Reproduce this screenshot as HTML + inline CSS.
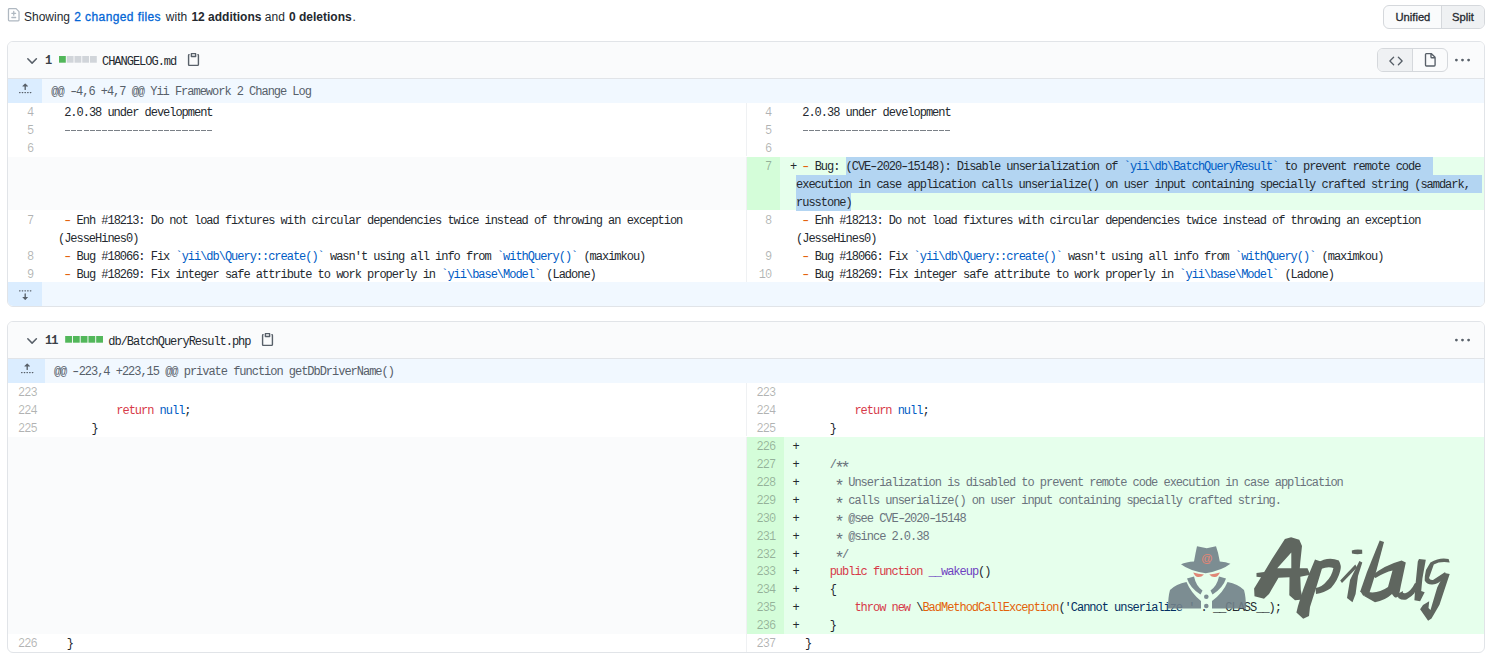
<!DOCTYPE html>
<html><head><meta charset="utf-8"><style>
*{box-sizing:border-box;margin:0;padding:0}
html,body{width:1492px;height:657px;overflow:hidden;background:#fff}
body{position:relative;-webkit-font-smoothing:antialiased;font-family:"Liberation Sans",sans-serif;color:#24292f;--ln:rgba(27,31,35,0.34)}
.abs{position:absolute}
.sans{font-size:12px;line-height:16px;white-space:pre;color:#24292f}
.btxt{font-size:11.2px;line-height:14px;white-space:pre;color:#24292f;-webkit-text-stroke:0.3px #24292f}
.mono{font-family:"Liberation Mono",monospace;font-size:12px;letter-spacing:-1.0200px;white-space:pre;line-height:18px;color:#24292f}
.bold{font-weight:bold;color:#3b4147}
.box{position:absolute;left:7px;width:1478px;border:1px solid #e1e4e8;border-radius:6px;overflow:hidden;background:#fff}
.ln{color:var(--ln)}
.hunk{color:#57606a}
.o{color:#e36209}
.b{color:#005cc5}
.kw{color:#d73a49}
.nl{color:#005cc5}
.nl2{color:#24292e}
.cm{color:#6a737d}
.fn{color:#6f42c1}
.cl{color:#e36209}
.st{color:#032f62}
.sel{background:#b4d5fb}
.selx{display:inline-block;width:6px;height:18px;vertical-align:top}
.hy{display:inline-block;transform:scaleX(1.45)}
.ast{display:inline-block;transform:translate(-0.3px,3.4px) scale(1.4)}
</style></head><body>
<svg class="abs" style="left:7.30px;top:8.00px" width="13.5" height="13.5" viewBox="0 0 16 16"><path fill="#afb8c1" d="M2.75 1.5a.25.25 0 00-.25.25v12.5c0 .138.112.25.25.25h10.5a.25.25 0 00.25-.25V4.664a.25.25 0 00-.073-.177l-2.914-2.914a.25.25 0 00-.177-.073H2.75zM1 1.75C1 .784 1.784 0 2.75 0h7.586c.464 0 .909.184 1.237.513l2.914 2.914c.329.328.513.773.513 1.237v9.586A1.75 1.75 0 0113.250 16H2.75A1.75 1.75 0 011 14.25V1.75zm7 1.5a.75.75 0 01.75.75v1.5h1.5a.75.75 0 010 1.5h-1.5v1.5a.75.75 0 01-1.5 0V7h-1.5a.75.75 0 010-1.5h1.5V4A.75.75 0 018 3.25zm-3 8a.75.75 0 01.75-.75h4.5a.75.75 0 010 1.5h-4.5a.75.75 0 01-.75-.75z"/></svg>
<div class="abs sans" style="left:24.0px;top:8.7px;">Showing</div>
<div class="abs sans" style="left:74.3px;top:8.7px;color:#0366d6;-webkit-text-stroke:0.3px #0366d6;letter-spacing:0.4px">2 changed files</div>
<div class="abs sans" style="left:165.8px;top:8.7px;">with</div>
<div class="abs sans" style="left:191.4px;top:8.7px;font-weight:bold">12 additions</div>
<div class="abs sans" style="left:264.8px;top:8.7px;">and</div>
<div class="abs sans" style="left:289.0px;top:8.7px;font-weight:bold">0 deletions</div>
<div class="abs sans" style="left:352.4px;top:8.7px;">.</div>
<div class="abs" style="left:1383px;top:5px;width:102px;height:24px;border:1px solid #d5d8dc;border-radius:6px;overflow:hidden;background:#fafbfc"><div class="abs" style="left:57px;top:0;width:45px;height:22px;background:#eff1f3;border-left:1px solid #d5d8dc"></div><div class="abs btxt" style="left:11.5px;top:4px">Unified</div><div class="abs btxt" style="left:68px;top:4px">Split</div></div>
<div class="box" style="top:41px;height:266px"><div class="abs" style="left:0.00px;top:0.00px;width:1476.00px;height:36.00px;background:#fafbfc;"></div><div class="abs" style="left:0.00px;top:36.00px;width:1476.00px;height:1.00px;background:#e1e4e8;"></div><svg class="abs" style="left:16.00px;top:9.90px" width="16.2" height="16.2" viewBox="0 0 16 16"><path fill="#586069" d="M12.78 6.22a.75.75 0 010 1.06l-4.25 4.25a.75.75 0 01-1.06 0L3.22 7.28a.75.75 0 011.06-1.06L8 9.94l3.72-3.72a.75.75 0 011.06 0z"/></svg><div class="abs mono bold" style="left:37.00px;top:10.30px;">1</div><svg class="abs" style="left:51px;top:14.20px;overflow:visible" width="40" height="7"><rect x="0.00" y="0" width="6.8" height="6.7" fill="#52b75a"/><rect x="7.75" y="0" width="6.8" height="6.7" fill="#d1d5da"/><rect x="15.50" y="0" width="6.8" height="6.7" fill="#d1d5da"/><rect x="23.25" y="0" width="6.8" height="6.7" fill="#d1d5da"/><rect x="31.00" y="0" width="6.8" height="6.7" fill="#d1d5da"/></svg><div class="abs mono " style="left:94.00px;top:10.50px;">CHANGELOG.md</div><svg class="abs" style="left:178.00px;top:9.60px" width="15" height="15" viewBox="0 0 16 16"><path fill="#586069" d="M5.75 1a.75.75 0 00-.75.75v3c0 .414.336.75.75.75h4.5a.75.75 0 00.75-.75v-3a.75.75 0 00-.75-.75h-4.5zm.75 3V2.5h3V4h-3zm-2.874-.467a.75.75 0 00-.752-1.298A1.75 1.75 0 002 3.75v9.5c0 .966.784 1.75 1.75 1.75h8.5A1.75 1.75 0 0014 13.25v-9.5a1.75 1.75 0 00-.874-1.515.75.75 0 10-.752 1.298.25.25 0 01.126.217v9.5a.25.25 0 01-.25.25h-8.5a.25.25 0 01-.25-.25v-9.5a.25.25 0 01.126-.217z"/></svg><div class="abs" style="left:1369px;top:6px;width:71px;height:24px;border:1px solid #d5d8dc;border-radius:6px;overflow:hidden;background:#fafbfc"><div class="abs" style="left:0;top:0;width:35px;height:22px;background:#eff1f3;border-right:1px solid #d5d8dc"></div></div><svg class="abs" style="left:1380.50px;top:11.50px" width="14" height="14" viewBox="0 0 16 16"><path fill="#586069" d="M4.72 3.22a.75.75 0 011.06 1.06L2.06 8l3.72 3.72a.75.75 0 11-1.06 1.06L.47 8.53a.75.75 0 010-1.06l4.25-4.25zm6.56 0a.75.75 0 10-1.06 1.06L13.94 8l-3.72 3.72a.75.75 0 101.06 1.06l4.25-4.25a.75.75 0 000-1.06l-4.25-4.25z"/></svg><svg class="abs" style="left:1414.90px;top:11.00px" width="14.6" height="14.6" viewBox="0 0 16 16"><path fill="#586069" d="M3.75 1.5a.25.25 0 00-.25.25v11.5c0 .138.112.25.25.25h8.5a.25.25 0 00.25-.25V6H9.75A1.75 1.75 0 018 4.25V1.5H3.75zm5.75.56v2.19c0 .138.112.25.25.25h2.19L9.5 2.06zM2 1.75C2 .784 2.784 0 3.75 0h5.086c.464 0 .909.184 1.237.513l3.414 3.414c.329.328.513.773.513 1.237v8.086A1.75 1.75 0 0112.25 15h-8.5A1.75 1.75 0 012 13.25V1.75z"/></svg><svg class="abs" style="left:1446.60px;top:10.60px" width="15" height="15" viewBox="0 0 16 16"><path fill="#586069" d="M8 9a1.5 1.5 0 100-3 1.5 1.5 0 000 3zM1.5 9a1.5 1.5 0 100-3 1.5 1.5 0 000 3zm13 0a1.5 1.5 0 100-3 1.5 1.5 0 000 3z"/></svg><div class="abs" style="left:0.00px;top:37.00px;width:34.00px;height:23.65px;background:#dbedff;"></div><div class="abs" style="left:34.00px;top:37.00px;width:1442.00px;height:23.65px;background:#f1f8ff;"></div><svg class="abs" style="left:10.40px;top:40.40px" width="14.4" height="14.4" viewBox="0 0 16 16"><path fill="#586069" d="M7.823 1.677L4.927 4.573A.25.25 0 005.104 5H7.25v3.236a.75.75 0 101.5 0V5h2.146a.25.25 0 00.177-.427L8.177 1.677a.25.25 0 00-.354 0zM13.75 11a.75.75 0 000 1.5h.5a.75.75 0 000-1.5h-.5zm-3.75.75a.75.75 0 01.75-.75h.5a.75.75 0 010 1.5h-.5a.75.75 0 01-.75-.75zM7.75 11a.75.75 0 000 1.5h.5a.75.75 0 000-1.5h-.5zM4 11.75a.75.75 0 01.75-.75h.5a.75.75 0 010 1.5h-.5a.75.75 0 01-.75-.75zM1.75 11a.75.75 0 000 1.5h.5a.75.75 0 000-1.5h-.5z"/></svg><div class="abs mono hunk" style="left:43.30px;top:41.00px;">@@ <span class="hy">-</span>4,6 +4,7 @@ Yii Framework 2 Change Log</div><div class="abs" style="left:738.00px;top:60.65px;width:1.00px;height:17.95px;background:#eff1f3;"></div><div class="abs mono ln" style="left:19.12px;top:61.95px;">4</div><div class="abs mono ln" style="left:756.92px;top:61.95px;">4</div><div class="abs mono " style="left:43.80px;top:61.95px;">  2.0.38 under development</div><div class="abs mono " style="left:781.90px;top:61.95px;">  2.0.38 under development</div><div class="abs" style="left:738.00px;top:78.60px;width:1.00px;height:17.95px;background:#eff1f3;"></div><div class="abs mono ln" style="left:19.12px;top:79.90px;">5</div><div class="abs mono ln" style="left:756.92px;top:79.90px;">5</div><div class="abs" style="left:56.76px;top:87.50px;width:148.32px;height:1.40px;background:repeating-linear-gradient(90deg,#7a8087 0,#7a8087 5.1px,transparent 5.1px,transparent 6.18px);"></div><div class="abs" style="left:794.86px;top:87.50px;width:148.32px;height:1.40px;background:repeating-linear-gradient(90deg,#7a8087 0,#7a8087 5.1px,transparent 5.1px,transparent 6.18px);"></div><div class="abs" style="left:738.00px;top:96.55px;width:1.00px;height:17.95px;background:#eff1f3;"></div><div class="abs mono ln" style="left:19.12px;top:97.85px;">6</div><div class="abs mono ln" style="left:756.92px;top:97.85px;">6</div><div class="abs mono " style="left:43.80px;top:97.85px;"> </div><div class="abs mono " style="left:781.90px;top:97.85px;"> </div><div class="abs" style="left:0.00px;top:114.50px;width:738.00px;height:53.85px;background:#fafbfc;"></div><div class="abs" style="left:738.00px;top:114.50px;width:1.00px;height:53.85px;background:#eff1f3;"></div><div class="abs" style="left:739.00px;top:114.50px;width:33.00px;height:53.85px;background:#d4fdd9;"></div><div class="abs" style="left:772.00px;top:114.50px;width:704.00px;height:53.85px;background:#e6ffec;"></div><div class="abs" style="left:838.00px;top:114.50px;width:586.90px;height:18.00px;background:#b3d5f2;"></div><div class="abs" style="left:788.00px;top:132.50px;width:685.80px;height:18.00px;background:#b3d5f2;"></div><div class="abs" style="left:788.00px;top:150.50px;width:55.00px;height:18.00px;background:#b3d5f2;"></div><div class="abs mono ln" style="left:756.92px;top:115.80px;">7</div><div class="abs mono " style="left:781.90px;top:115.80px;">+ <span class="o"><span class="hy">-</span></span> Bug: (CVE<span class="hy">-</span>2020<span class="hy">-</span>15148): Disable unserialization of <span class="b">`yii\db\BatchQueryResult`</span> to prevent remote code</div><div class="abs mono " style="left:788.08px;top:133.75px;">execution in case application calls unserialize() on user input containing specially crafted string (samdark,</div><div class="abs mono " style="left:788.08px;top:151.70px;">russtone)</div><div class="abs" style="left:738.00px;top:168.35px;width:1.00px;height:35.90px;background:#eff1f3;"></div><div class="abs mono ln" style="left:19.12px;top:169.65px;">7</div><div class="abs mono ln" style="left:756.92px;top:169.65px;">8</div><div class="abs mono " style="left:43.80px;top:169.65px;">  <span class="o"><span class="hy">-</span></span> Enh #18213: Do not load fixtures with circular dependencies twice instead of throwing an exception</div><div class="abs mono " style="left:49.98px;top:187.60px;">(JesseHines0)</div><div class="abs mono " style="left:781.90px;top:169.65px;">  <span class="o"><span class="hy">-</span></span> Enh #18213: Do not load fixtures with circular dependencies twice instead of throwing an exception</div><div class="abs mono " style="left:788.08px;top:187.60px;">(JesseHines0)</div><div class="abs" style="left:738.00px;top:204.25px;width:1.00px;height:17.95px;background:#eff1f3;"></div><div class="abs mono ln" style="left:19.12px;top:205.55px;">8</div><div class="abs mono ln" style="left:756.92px;top:205.55px;">9</div><div class="abs mono " style="left:43.80px;top:205.55px;">  <span class="o"><span class="hy">-</span></span> Bug #18066: Fix <span class="b">`yii\db\Query::create()`</span> wasn't using all info from <span class="b">`withQuery()`</span> (maximkou)</div><div class="abs mono " style="left:781.90px;top:205.55px;">  <span class="o"><span class="hy">-</span></span> Bug #18066: Fix <span class="b">`yii\db\Query::create()`</span> wasn't using all info from <span class="b">`withQuery()`</span> (maximkou)</div><div class="abs" style="left:738.00px;top:222.20px;width:1.00px;height:17.95px;background:#eff1f3;"></div><div class="abs mono ln" style="left:19.12px;top:223.50px;">9</div><div class="abs mono ln" style="left:750.74px;top:223.50px;">10</div><div class="abs mono " style="left:43.80px;top:223.50px;">  <span class="o"><span class="hy">-</span></span> Bug #18269: Fix integer safe attribute to work properly in <span class="b">`yii\base\Model`</span> (Ladone)</div><div class="abs mono " style="left:781.90px;top:223.50px;">  <span class="o"><span class="hy">-</span></span> Bug #18269: Fix integer safe attribute to work properly in <span class="b">`yii\base\Model`</span> (Ladone)</div><div class="abs" style="left:0.00px;top:240.15px;width:34.00px;height:23.85px;background:#dbedff;"></div><div class="abs" style="left:34.00px;top:240.15px;width:1442.00px;height:23.85px;background:#f1f8ff;"></div><svg class="abs" style="left:10.40px;top:245.05px" width="14.4" height="14.4" viewBox="0 0 16 16"><path fill="#586069" d="M8.177 14.323l2.896-2.896a.25.25 0 00-.177-.427H8.75V7.764a.75.75 0 10-1.5 0V11H5.104a.25.25 0 00-.177.427l2.896 2.896a.25.25 0 00.354 0zM2.25 5a.75.75 0 000-1.5h-.5a.75.75 0 000 1.5h.5zM6 4.25a.75.75 0 01-.75.75h-.5a.75.75 0 010-1.5h.5a.75.75 0 01.75.75zM8.25 5a.75.75 0 000-1.5h-.5a.75.75 0 000 1.5h.5zM12 4.25a.75.75 0 01-.75.75h-.5a.75.75 0 010-1.5h.5a.75.75 0 01.75.75zm2.25.75a.75.75 0 000-1.5h-.5a.75.75 0 000 1.5h.5z"/></svg></div>
<div class="box" style="top:321px;height:332px"><div class="abs" style="left:0.00px;top:0.00px;width:1476.00px;height:36.00px;background:#fafbfc;"></div><div class="abs" style="left:0.00px;top:36.00px;width:1476.00px;height:1.00px;background:#e1e4e8;"></div><svg class="abs" style="left:16.00px;top:9.90px" width="16.2" height="16.2" viewBox="0 0 16 16"><path fill="#586069" d="M12.78 6.22a.75.75 0 010 1.06l-4.25 4.25a.75.75 0 01-1.06 0L3.22 7.28a.75.75 0 011.06-1.06L8 9.94l3.72-3.72a.75.75 0 011.06 0z"/></svg><div class="abs mono bold" style="left:37.00px;top:10.30px;">11</div><svg class="abs" style="left:51px;top:14.20px;overflow:visible" width="40" height="7"><rect x="6.18" y="0" width="6.8" height="6.7" fill="#52b75a"/><rect x="13.93" y="0" width="6.8" height="6.7" fill="#52b75a"/><rect x="21.68" y="0" width="6.8" height="6.7" fill="#52b75a"/><rect x="29.43" y="0" width="6.8" height="6.7" fill="#52b75a"/><rect x="37.18" y="0" width="6.8" height="6.7" fill="#52b75a"/></svg><div class="abs mono " style="left:100.30px;top:10.50px;">db/BatchQueryResult.php</div><svg class="abs" style="left:252.00px;top:9.60px" width="15" height="15" viewBox="0 0 16 16"><path fill="#586069" d="M5.75 1a.75.75 0 00-.75.75v3c0 .414.336.75.75.75h4.5a.75.75 0 00.75-.75v-3a.75.75 0 00-.75-.75h-4.5zm.75 3V2.5h3V4h-3zm-2.874-.467a.75.75 0 00-.752-1.298A1.75 1.75 0 002 3.75v9.5c0 .966.784 1.75 1.75 1.75h8.5A1.75 1.75 0 0014 13.25v-9.5a1.75 1.75 0 00-.874-1.515.75.75 0 10-.752 1.298.25.25 0 01.126.217v9.5a.25.25 0 01-.25.25h-8.5a.25.25 0 01-.25-.25v-9.5a.25.25 0 01.126-.217z"/></svg><svg class="abs" style="left:1446.60px;top:10.60px" width="15" height="15" viewBox="0 0 16 16"><path fill="#586069" d="M8 9a1.5 1.5 0 100-3 1.5 1.5 0 000 3zM1.5 9a1.5 1.5 0 100-3 1.5 1.5 0 000 3zm13 0a1.5 1.5 0 100-3 1.5 1.5 0 000 3z"/></svg><div class="abs" style="left:0.00px;top:37.00px;width:37.30px;height:23.65px;background:#dbedff;"></div><div class="abs" style="left:37.30px;top:37.00px;width:1438.70px;height:23.65px;background:#f1f8ff;"></div><svg class="abs" style="left:12.05px;top:40.40px" width="14.4" height="14.4" viewBox="0 0 16 16"><path fill="#586069" d="M7.823 1.677L4.927 4.573A.25.25 0 005.104 5H7.25v3.236a.75.75 0 101.5 0V5h2.146a.25.25 0 00.177-.427L8.177 1.677a.25.25 0 00-.354 0zM13.75 11a.75.75 0 000 1.5h.5a.75.75 0 000-1.5h-.5zm-3.75.75a.75.75 0 01.75-.75h.5a.75.75 0 010 1.5h-.5a.75.75 0 01-.75-.75zM7.75 11a.75.75 0 000 1.5h.5a.75.75 0 000-1.5h-.5zM4 11.75a.75.75 0 01.75-.75h.5a.75.75 0 010 1.5h-.5a.75.75 0 01-.75-.75zM1.75 11a.75.75 0 000 1.5h.5a.75.75 0 000-1.5h-.5z"/></svg><div class="abs mono hunk" style="left:45.90px;top:41.00px;">@@ <span class="hy">-</span>223,4 +223,15 @@ private function getDbDriverName()</div><div class="abs" style="left:738.00px;top:60.65px;width:1.00px;height:17.95px;background:#eff1f3;"></div><div class="abs mono ln" style="left:10.06px;top:61.95px;">223</div><div class="abs mono ln" style="left:748.56px;top:61.95px;">223</div><div class="abs mono " style="left:46.50px;top:61.95px;"> </div><div class="abs mono " style="left:784.60px;top:61.95px;"> </div><div class="abs" style="left:738.00px;top:78.60px;width:1.00px;height:17.95px;background:#eff1f3;"></div><div class="abs mono ln" style="left:10.06px;top:79.90px;">224</div><div class="abs mono ln" style="left:748.56px;top:79.90px;">224</div><div class="abs mono " style="left:46.50px;top:79.90px;">          <span class="kw">return</span> <span class="nl">null</span>;</div><div class="abs mono " style="left:784.60px;top:79.90px;">          <span class="kw">return</span> <span class="nl">null</span>;</div><div class="abs" style="left:738.00px;top:96.55px;width:1.00px;height:17.95px;background:#eff1f3;"></div><div class="abs mono ln" style="left:10.06px;top:97.85px;">225</div><div class="abs mono ln" style="left:748.56px;top:97.85px;">225</div><div class="abs mono " style="left:46.50px;top:97.85px;">      }</div><div class="abs mono " style="left:784.60px;top:97.85px;">      }</div><div class="abs" style="left:0.00px;top:114.50px;width:738.00px;height:17.95px;background:#fafbfc;"></div><div class="abs" style="left:738.00px;top:114.50px;width:1.00px;height:17.95px;background:#eff1f3;"></div><div class="abs" style="left:739.00px;top:114.50px;width:37.00px;height:17.95px;background:#d4fdd9;"></div><div class="abs" style="left:776.00px;top:114.50px;width:700.00px;height:17.95px;background:#e6ffec;"></div><div class="abs mono ln" style="left:748.56px;top:115.80px;">226</div><div class="abs mono " style="left:784.60px;top:115.80px;">+ </div><div class="abs" style="left:0.00px;top:132.45px;width:738.00px;height:17.95px;background:#fafbfc;"></div><div class="abs" style="left:738.00px;top:132.45px;width:1.00px;height:17.95px;background:#eff1f3;"></div><div class="abs" style="left:739.00px;top:132.45px;width:37.00px;height:17.95px;background:#d4fdd9;"></div><div class="abs" style="left:776.00px;top:132.45px;width:700.00px;height:17.95px;background:#e6ffec;"></div><div class="abs mono ln" style="left:748.56px;top:133.75px;">227</div><div class="abs mono " style="left:784.60px;top:133.75px;">+     <span class="cm">/<span class="ast">*</span><span class="ast">*</span></span></div><div class="abs" style="left:0.00px;top:150.40px;width:738.00px;height:17.95px;background:#fafbfc;"></div><div class="abs" style="left:738.00px;top:150.40px;width:1.00px;height:17.95px;background:#eff1f3;"></div><div class="abs" style="left:739.00px;top:150.40px;width:37.00px;height:17.95px;background:#d4fdd9;"></div><div class="abs" style="left:776.00px;top:150.40px;width:700.00px;height:17.95px;background:#e6ffec;"></div><div class="abs mono ln" style="left:748.56px;top:151.70px;">228</div><div class="abs mono " style="left:784.60px;top:151.70px;">+     <span class="cm"> <span class="ast">*</span> Unserialization is disabled to prevent remote code execution in case application</span></div><div class="abs" style="left:0.00px;top:168.35px;width:738.00px;height:17.95px;background:#fafbfc;"></div><div class="abs" style="left:738.00px;top:168.35px;width:1.00px;height:17.95px;background:#eff1f3;"></div><div class="abs" style="left:739.00px;top:168.35px;width:37.00px;height:17.95px;background:#d4fdd9;"></div><div class="abs" style="left:776.00px;top:168.35px;width:700.00px;height:17.95px;background:#e6ffec;"></div><div class="abs mono ln" style="left:748.56px;top:169.65px;">229</div><div class="abs mono " style="left:784.60px;top:169.65px;">+     <span class="cm"> <span class="ast">*</span> calls unserialize() on user input containing specially crafted string.</span></div><div class="abs" style="left:0.00px;top:186.30px;width:738.00px;height:17.95px;background:#fafbfc;"></div><div class="abs" style="left:738.00px;top:186.30px;width:1.00px;height:17.95px;background:#eff1f3;"></div><div class="abs" style="left:739.00px;top:186.30px;width:37.00px;height:17.95px;background:#d4fdd9;"></div><div class="abs" style="left:776.00px;top:186.30px;width:700.00px;height:17.95px;background:#e6ffec;"></div><div class="abs mono ln" style="left:748.56px;top:187.60px;">230</div><div class="abs mono " style="left:784.60px;top:187.60px;">+     <span class="cm"> <span class="ast">*</span> @see CVE<span class="hy">-</span>2020<span class="hy">-</span>15148</span></div><div class="abs" style="left:0.00px;top:204.25px;width:738.00px;height:17.95px;background:#fafbfc;"></div><div class="abs" style="left:738.00px;top:204.25px;width:1.00px;height:17.95px;background:#eff1f3;"></div><div class="abs" style="left:739.00px;top:204.25px;width:37.00px;height:17.95px;background:#d4fdd9;"></div><div class="abs" style="left:776.00px;top:204.25px;width:700.00px;height:17.95px;background:#e6ffec;"></div><div class="abs mono ln" style="left:748.56px;top:205.55px;">231</div><div class="abs mono " style="left:784.60px;top:205.55px;">+     <span class="cm"> <span class="ast">*</span> @since 2.0.38</span></div><div class="abs" style="left:0.00px;top:222.20px;width:738.00px;height:17.95px;background:#fafbfc;"></div><div class="abs" style="left:738.00px;top:222.20px;width:1.00px;height:17.95px;background:#eff1f3;"></div><div class="abs" style="left:739.00px;top:222.20px;width:37.00px;height:17.95px;background:#d4fdd9;"></div><div class="abs" style="left:776.00px;top:222.20px;width:700.00px;height:17.95px;background:#e6ffec;"></div><div class="abs mono ln" style="left:748.56px;top:223.50px;">232</div><div class="abs mono " style="left:784.60px;top:223.50px;">+     <span class="cm"> <span class="ast">*</span>/</span></div><div class="abs" style="left:0.00px;top:240.15px;width:738.00px;height:17.95px;background:#fafbfc;"></div><div class="abs" style="left:738.00px;top:240.15px;width:1.00px;height:17.95px;background:#eff1f3;"></div><div class="abs" style="left:739.00px;top:240.15px;width:37.00px;height:17.95px;background:#d4fdd9;"></div><div class="abs" style="left:776.00px;top:240.15px;width:700.00px;height:17.95px;background:#e6ffec;"></div><div class="abs mono ln" style="left:748.56px;top:241.45px;">233</div><div class="abs mono " style="left:784.60px;top:241.45px;">+     <span class="kw">public</span> <span class="kw">function</span> <span class="fn">__wakeup</span>()</div><div class="abs" style="left:0.00px;top:258.10px;width:738.00px;height:17.95px;background:#fafbfc;"></div><div class="abs" style="left:738.00px;top:258.10px;width:1.00px;height:17.95px;background:#eff1f3;"></div><div class="abs" style="left:739.00px;top:258.10px;width:37.00px;height:17.95px;background:#d4fdd9;"></div><div class="abs" style="left:776.00px;top:258.10px;width:700.00px;height:17.95px;background:#e6ffec;"></div><div class="abs mono ln" style="left:748.56px;top:259.40px;">234</div><div class="abs mono " style="left:784.60px;top:259.40px;">+     {</div><div class="abs" style="left:0.00px;top:276.05px;width:738.00px;height:17.95px;background:#fafbfc;"></div><div class="abs" style="left:738.00px;top:276.05px;width:1.00px;height:17.95px;background:#eff1f3;"></div><div class="abs" style="left:739.00px;top:276.05px;width:37.00px;height:17.95px;background:#d4fdd9;"></div><div class="abs" style="left:776.00px;top:276.05px;width:700.00px;height:17.95px;background:#e6ffec;"></div><div class="abs mono ln" style="left:748.56px;top:277.35px;">235</div><div class="abs mono " style="left:784.60px;top:277.35px;">+         <span class="kw">throw</span> <span class="kw">new</span> \<span class="cl">BadMethodCallException</span>(<span class="st">'Cannot unserialize '</span> . <span class="nl2">__CLASS__</span>);</div><div class="abs" style="left:0.00px;top:294.00px;width:738.00px;height:17.95px;background:#fafbfc;"></div><div class="abs" style="left:738.00px;top:294.00px;width:1.00px;height:17.95px;background:#eff1f3;"></div><div class="abs" style="left:739.00px;top:294.00px;width:37.00px;height:17.95px;background:#d4fdd9;"></div><div class="abs" style="left:776.00px;top:294.00px;width:700.00px;height:17.95px;background:#e6ffec;"></div><div class="abs mono ln" style="left:748.56px;top:295.30px;">236</div><div class="abs mono " style="left:784.60px;top:295.30px;">+     }</div><div class="abs" style="left:738.00px;top:311.95px;width:1.00px;height:17.95px;background:#eff1f3;"></div><div class="abs mono ln" style="left:10.06px;top:313.25px;">226</div><div class="abs mono ln" style="left:748.56px;top:313.25px;">237</div><div class="abs mono " style="left:46.50px;top:313.25px;">  }</div><div class="abs mono " style="left:784.60px;top:313.25px;">  }</div></div>
<svg class="abs" style="left:0;top:0;overflow:visible" width="1492" height="657" viewBox="0 0 1492 657"><g opacity="0.9">
<path fill="#718189" d="M1197,546.3 L1206.8,548.3 L1216,546.3 Q1218.5,553 1219.8,561.5 Q1226,562 1230.4,563.8 Q1222,570.5 1205.7,573.3 Q1189,570.5 1181,564.2 Q1186,562 1194,561.5 Q1195.5,553 1197,546.3 Z"/>
<text x="1206.8" y="561.8" fill="#e07a6a" font-family="Liberation Sans" font-size="11.5" font-weight="bold" text-anchor="middle">@</text>
<path fill="#e07a6a" d="M1193.2,572.4 Q1198,574 1204,574.5 Q1201,577.5 1198,577 Q1195,576.5 1193.2,572.4 Z"/>
<path fill="#e07a6a" d="M1220,572.4 Q1215,574 1209.3,574.5 Q1212,577.5 1215,577 Q1218,576.5 1220,572.4 Z"/>
<path fill="#718189" d="M1187,578.5 L1194,576.5 Q1196,586 1202.5,590.5 L1200.5,594.5 Q1190,588 1187,578.5 Z"/>
<path fill="#718189" d="M1226,578.5 L1219,576.5 Q1217,586 1210.5,590.5 L1212.5,594.5 Q1223,588 1226,578.5 Z"/>
<path fill="#718189" d="M1170,590 Q1176,584 1186.5,582 Q1191,593 1201,601 L1201,608.5 L1168,608.5 Q1168,597 1170,590 Z"/>
<path fill="#718189" d="M1244,590 Q1238,584 1227.5,582 Q1223,593 1212,601 L1212,608.5 L1246,608.5 Q1246,597 1244,590 Z"/>
<circle cx="1206.3" cy="596.8" r="2.3" fill="#718189"/>
<circle cx="1206.3" cy="606" r="2.3" fill="#718189"/>
</g><path fill="#5f665f" fill-rule="evenodd" d="M1254.1,588.4 L1263,574 L1272,559 L1284.9,539.1 L1291.1,537.3 L1299.3,539.8 L1302,546 L1300.3,562 L1299.8,568.3 L1307.5,568.2 L1310.3,574.7 L1300.3,576.8 L1300.8,590 L1302.8,599.4 L1295,600.3 L1289.3,595.3 L1289.5,577.2 L1278.5,577.8 L1269,594 L1264,598.8 L1254.5,596.3 Z M1291.3,552.5 L1277.2,568.3 L1291.3,568.3 Z"/><path fill="#5f665f" fill-rule="evenodd" d="M1256.5,573 L1270,571.3 L1267,578 L1256.5,576.8 Z"/><path fill="#5f665f" fill-rule="evenodd" d="M1315,559.5 L1323.8,562.4 L1317,585 L1310,607 L1309,616 L1303.2,618.8 L1296.4,612.5 L1298,606 L1303,590 L1309,574 Z"/><path fill="#5f665f" fill-rule="evenodd" d="M1317,563 Q1328,556 1338.8,560.5 Q1342,566 1340.2,571 Q1338,580 1331,588 Q1324,593 1316,594 L1315.5,588 Q1322,587 1326,582 Q1332,576 1333.4,568 Q1328,566 1321,569 Z"/><path fill="#5f665f" fill-rule="evenodd" d="M1351.8,550.5 Q1356,548.8 1362.1,549.8 L1362.3,553.8 Q1357,554.8 1352,553.6 Z"/><path fill="#5f665f" fill-rule="evenodd" d="M1359.4,561 L1362.3,562.4 L1358,576 L1355.6,593.9 L1352.5,602.3 L1347,598 L1350,580 Z"/><path fill="#5f665f" fill-rule="evenodd" d="M1340.2,580.5 L1355.3,564.5 L1357,567.5 L1342,583 Z"/><path fill="#5f665f" fill-rule="evenodd" d="M1379.7,540.5 L1384,542 L1376,572 L1368.7,595.3 L1363.2,595.8 L1360.3,591.2 L1367,572 Z"/><path fill="#5f665f" fill-rule="evenodd" d="M1372,575.5 Q1385,565 1401.6,560.5 L1405.8,562.4 L1401,585 L1399,595.3 Q1396,600.5 1392,594 Q1385,600.5 1375,602.3 L1364,596 L1368,592 Q1378,594 1388,587 L1392.5,570.5 Q1385,572 1375.5,578 Z"/><path fill="#5f665f" fill-rule="evenodd" d="M1397.5,594 L1398.4,597.9 Q1402,600.5 1406.4,599.5 Q1412,596.5 1414.4,593.3 L1418.5,584 L1415,583 Q1411,591 1406,593 Q1402,594 1403,591 Z"/><path fill="#5f665f" fill-rule="evenodd" d="M1419,559.1 L1425.8,559.7 L1422.4,578.5 L1421.2,591 L1424.7,592.2 L1420.1,601.3 L1414.4,600.2 L1415.5,584.2 L1417.8,561.4 Z"/><path fill="#5f665f" fill-rule="evenodd" d="M1430.4,562.5 Q1440,557 1448.6,559.1 L1449.7,562.5 Q1440,561 1433.8,564.5 L1429,578 Q1430,580.5 1433,580 L1445.2,572 L1445.5,577 Q1438,584.5 1432.6,584.5 Q1427,585 1424.7,580.5 Q1424.5,576 1426,570 Z"/><path fill="#5f665f" fill-rule="evenodd" d="M1444.5,573 L1449.7,574 L1439.5,604.8 L1431.5,618.4 L1428.1,620.7 L1420.1,609.3 L1423,605 L1429.2,601.3 L1428.5,608 L1430.5,610 L1437.2,587.6 Z"/></svg>
</body></html>
